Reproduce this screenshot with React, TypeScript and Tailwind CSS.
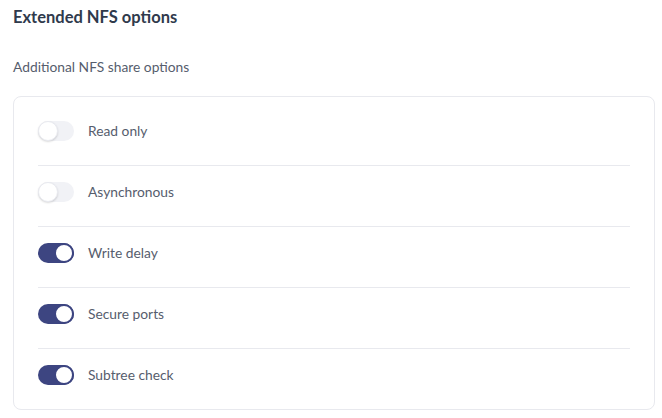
import React, { useState } from 'react';

const options = [
  { label: 'Read only', on: false },
  { label: 'Asynchronous', on: false },
  { label: 'Write delay', on: true },
  { label: 'Secure ports', on: true },
  { label: 'Subtree check', on: true },
];

const Toggle: React.FC<{ on: boolean; onClick: () => void }> = ({ on, onClick }) => (
  <button
    onClick={onClick}
    className={`relative h-5 w-9 shrink-0 rounded-full ${on ? 'bg-[#3d4581]' : 'bg-[#f1f2f6]'}`}
  >
    <span
      className={`absolute top-0 h-5 w-5 rounded-full bg-white ${
        on ? 'left-4 border-2 border-[#3d4581]' : 'left-0 border border-[#e9eaf0] shadow-[0_1px_2px_rgba(0,0,0,0.15)]'
      }`}
    />
  </button>
);

export default function App() {
  const [state, setState] = useState(options.map((o) => o.on));

  return (
    <div className="bg-white pl-[13px] pr-[7px] pt-[7px] font-['Lato',sans-serif]" style={{ minHeight: 418 }}>
      <h2 className="text-[16.5px] font-bold leading-5 text-[#2f3a4c]">Extended NFS options</h2>
      <p className="mt-[30px] text-[13.8px] leading-5 text-[#565d6d]">Additional NFS share options</p>

      <div className="mt-[19px] rounded-lg border border-[#e8e9ee] px-6 pt-2">
        {options.map((o, i) => (
          <div
            key={o.label}
            className={`flex items-center gap-[14px] pt-4 pb-6 ${i < options.length - 1 ? 'border-b border-[#e8e9ee]' : ''}`}
          >
            <Toggle
              on={state[i]}
              onClick={() => setState((s) => s.map((v, j) => (j === i ? !v : v)))}
            />
            <span className="text-[13.8px] leading-5 text-[#565d6d]">{o.label}</span>
          </div>
        ))}
      </div>
    </div>
  );
}
